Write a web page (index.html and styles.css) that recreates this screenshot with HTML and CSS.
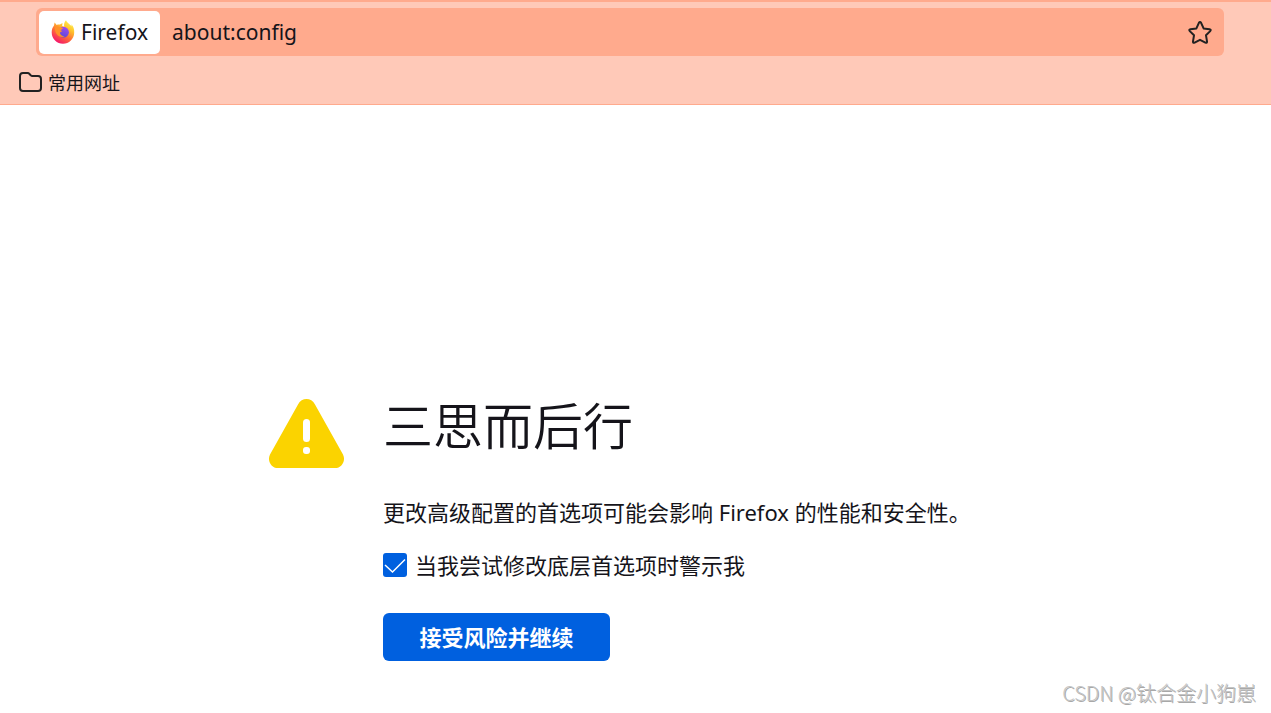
FILE: index.html
```
<!DOCTYPE html>
<html lang="zh-CN">
<head>
<meta charset="utf-8">
<title>about:config</title>
<link rel="stylesheet" href="styles.css">
</head>

<body>
<header class="toolbox">
    <div class="urlbar">
        <button type="button" class="identity">
            <svg class="logo" viewBox="0 0 24 24" aria-hidden="true">
                <defs>
                    <linearGradient id="flame" x1="0.8" y1="0.05" x2="0.25" y2="0.95">
                        <stop offset="0" stop-color="#fff14f"/>
                        <stop offset="0.3" stop-color="#ffc02b"/>
                        <stop offset="0.6" stop-color="#ff7035"/>
                        <stop offset="1" stop-color="#f5156c"/>
                    </linearGradient>
                    <linearGradient id="globe" x1="0.7" y1="0" x2="0.3" y2="1">
                        <stop offset="0" stop-color="#a04cf0"/>
                        <stop offset="1" stop-color="#5a48d6"/>
                    </linearGradient>
                </defs>
                <path fill="url(#flame)" d="M15 .3c.6 2.4 3.800 3.400 5.600 6.200 0-.8-.1-1.600-.3-2.200C22.500 6.500 23.400 9.500 23.200 12.800A11.300 11.200 0 0 1 12 23.700 11.300 11.200 0 0 1 .7 12.600C.6 9.500 1.600 7.200 3 5.400L3.600 2.500 5.700 4.900c1.200-.5 2.200-.5 3.300-.3L11.500 3 11.200 6l2 .7C12.800 3.800 13.500 1.800 15 .3z"/>
                <circle cx="12.500" cy="12.200" r="5.400" fill="url(#globe)"/>
                <path fill="#ff9128" d="M3.800 6.800c2.200-.7 4-.4 5.400.8l2.700.4c.1 1-1.900 1.400-2.200 2.200.4.700 1.100.5 1.800.6-.7 1.100-2 1.100-2.600 1.900.4 2.200 2.500 3.700 5.200 3.400-4.500 2.700-10.700-.8-10.300-9.300z"/>
            </svg>
            Firefox
        </button>
        <input class="address" type="text" value="about:config" aria-label="地址栏" spellcheck="false">
        <button type="button" class="bookmark" aria-label="添加书签">
            <svg viewBox="0 0 24 24" aria-hidden="true">
                <path d="M10.900 2.900q1.100-1.700 2.200 0l2.500 5.500 5.900.8q2 .4.700 1.900l-4.200 4.200 1 6q.2 2-1.600 1.300L12 19.800l-5.400 2.800q-1.800.7-1.600-1.300l1-6-4.200-4.200Q.5 9.600 2.500 9.200l5.900-.8z"/>
            </svg>
        </button>
    </div>
    <nav class="bookmarks">
        <a href="#" class="folder">
            <svg viewBox="0 0 24 22" aria-hidden="true">
                <path d="M4 2h4.500c1 0 1.500.3 2 1l1 1.200c.4.500.8.800 1.500.8h6c1.700 0 3 1.300 3 3v9c0 1.700-1.300 3-3 3H4c-1.700 0-3-1.300-3-3V5c0-1.700 1.300-3 3-3z"/>
            </svg>
            常用网址
        </a>
    </nav>
</header>

<main class="warning">
    <svg class="warning-icon" viewBox="0 0 75 69" aria-hidden="true">
        <path fill="#fbd300" d="M29 5.500c3.700-7.300 13.300-7.300 17 0l28 50c3 6-1 13.500-8 13.500H9c-7 0-11-7.500-8-13.500z"/>
        <rect x="34" y="20" width="7" height="23" rx="3.5" fill="#fff"/>
        <rect x="34" y="48" width="7" height="7" rx="3" fill="#fff"/>
    </svg>
    <div class="warning-text">
        <h1>三思而后行</h1>
        <p>更改高级配置的首选项可能会影响 Firefox 的性能和安全性。</p>
        <label class="check">
            <input type="checkbox" checked>
            <svg viewBox="0 0 24 24" aria-hidden="true"><path d="M2 12l7.500 7L22 6.500"/></svg>
            <span>当我尝试修改底层首选项时警示我</span>
        </label>
        <button type="button" class="accept">接受风险并继续</button>
    </div>
</main>

<div class="watermark">CSDN @钛合金小狗崽</div>
</body>

</html>
```
FILE: styles.css
```
* {
    box-sizing: border-box;
}

body {
    margin: 0;
    min-height: 100vh;
    position: relative;
    background: #fff;
    color: #15141a;
    font-family: "Noto Sans", "Noto Sans CJK SC", sans-serif;
    font-size: 22px;
}

button,
input {
    margin: 0;
    border: 0;
    color: inherit;
    font: inherit;
}

/* toolbar */
.toolbox {
    background: #ffc9b8;
    border-top: 2px solid #ffaa8d;
    border-bottom: 1px solid #ffaa8d;
}

.urlbar {
    display: flex;
    align-items: center;
    height: 48px;
    margin: 6px 47px 0 36px;
    padding: 3px;
    border-radius: 6px;
    background: #ffaa8d;
    font-size: 21px;
}

.identity {
    display: flex;
    align-items: center;
    gap: 6px;
    height: 43px;
    padding: 0 12px;
    border-radius: 5px;
    background: #fff;
}

.logo {
    width: 24px;
    height: 24px;
}

.address {
    flex: 1;
    min-width: 0;
    padding: 0 12px;
    background: none;
    outline: none;
}

.bookmark {
    padding: 0 9px;
    background: none;
}

.bookmark svg {
    display: block;
    width: 24px;
    height: 24px;
}

.bookmark path,
.folder path {
    fill: none;
    stroke: #222;
    stroke-width: 2;
    stroke-linejoin: round;
}

.bookmarks {
    display: flex;
    height: 48px;
    padding: 0 19px;
}

.folder {
    display: flex;
    align-items: center;
    gap: 5px;
    padding-top: 4px;
    color: inherit;
    font-size: 18px;
    text-decoration: none;
}

.folder svg {
    width: 24px;
    height: 22px;
}

/* warning page */
.warning {
    display: flex;
    align-items: flex-start;
    gap: 39px;
    max-width: 733px;
    margin: 0 auto;
    padding: 294px 0 52px;
}

.warning-icon {
    flex: none;
    width: 75px;
    height: 69px;
}

.warning-text h1 {
    margin: 0 0 47px;
    font-family: "Noto Sans CJK SC", sans-serif;
    font-size: 50px;
    font-weight: 350;
    line-height: 48px;
}

.warning-text p {
    margin: 0;
    line-height: 36px;
}

.check {
    display: flex;
    align-items: center;
    gap: 8px;
    margin: 17px 0 30px;
    line-height: 36px;
}

.check input {
    appearance: none;
    flex: none;
    width: 24px;
    height: 24px;
    border-radius: 3px;
    background: #0060df;
}

.check svg {
    width: 24px;
    height: 24px;
    margin-left: -32px;
    pointer-events: none;
}

.check path {
    display: none;
    fill: none;
    stroke: #fff;
    stroke-width: 1.5;
}

.check input:checked + svg path {
    display: block;
}

.accept {
    min-width: 227px;
    height: 48px;
    padding: 0 32px 2px;
    border-radius: 6px;
    background: #0060df;
    color: #fff;
    font-weight: 700;
}

.watermark {
    position: absolute;
    right: 15px;
    bottom: 6px;
    color: #c4c4c4;
    font-size: 20px;
    font-family: "Noto Sans CJK SC", sans-serif;
    font-weight: 300;
    line-height: 28px;
    text-shadow: 1px 1px 0 #a8a8a8;
}
```
